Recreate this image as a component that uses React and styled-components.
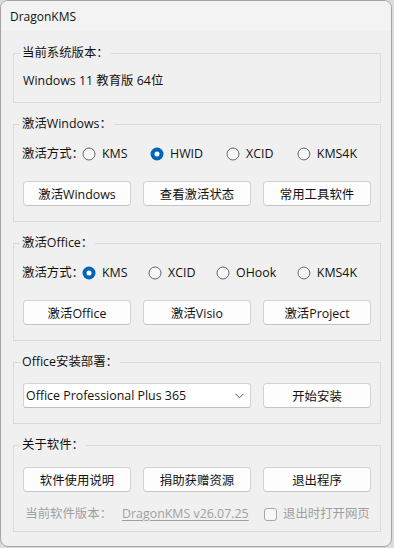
import React, { useState } from "react";
import styled, { createGlobalStyle } from "styled-components";

const GlobalStyle = createGlobalStyle`
  html, body {
    margin: 0;
    padding: 0;
    background: #dcdcdc;
  }
  body {
    font-family: "Open Sans", "Noto Sans CJK SC", sans-serif;
    font-size: 12.4px;
    color: #111;
  }
`;

const Window = styled.div`
  width: 392px;
  height: 547px;
  box-sizing: border-box;
  border: 1px solid #a3a3a3;
  border-radius: 8px;
  background: #f0f0f0;
  overflow: hidden;
  display: flex;
  flex-direction: column;
`;

const TitleBar = styled.div`
  height: 30px;
  flex: none;
  background: #f3f3f3;
  display: flex;
  align-items: center;
  padding-left: 9px;
  font-size: 12px;
  color: #111;
`;

const Body = styled.div`
  padding: 14px 10px 0 12px;
  display: flex;
  flex-direction: column;
  gap: 13px;
`;

const Group = styled.fieldset`
  margin: 0;
  border: 1px solid #dadada;
  padding: 0 9px ${(p) => p.$bottom}px 9px;
  min-width: 0;
`;

const Legend = styled.legend`
  padding: 0 2px;
  margin-left: -3px;
  line-height: 16px;
  color: #111;
`;

const Line = styled.div`
  margin-top: ${(p) => p.$top}px;
  line-height: 16px;
  height: 16px;
  display: flex;
  align-items: center;
  white-space: nowrap;
`;

const RadioLabel = styled.span`
  width: 60px;
  margin-left: -1px;
  flex: none;
  white-space: nowrap;
`;

const RadioItem = styled.label`
  width: ${(p) => p.$w}px;
  flex: none;
  display: flex;
  align-items: center;
  gap: 6px;
  cursor: default;
`;

const Grid = styled.div`
  margin-top: ${(p) => p.$top}px;
  display: grid;
  grid-template-columns: repeat(3, 1fr);
  column-gap: 12px;
`;

const Button = styled.button`
  height: 25px;
  box-sizing: border-box;
  background: #fdfdfd;
  border: 1px solid #d3d3d3;
  border-bottom-color: #c4c4c4;
  border-radius: 4px;
  font: inherit;
  color: #111;
  padding: 0;
  white-space: nowrap;
`;

const Select = styled.div`
  grid-column: span 2;
  height: 25px;
  box-sizing: border-box;
  background: #fff;
  border: 1px solid #d3d3d3;
  border-bottom-color: #bdbdbd;
  border-radius: 3px;
  display: flex;
  align-items: center;
  justify-content: space-between;
  padding: 0 6px 0 2px;
  color: #111;
  white-space: nowrap;
`;

const Footer = styled.div`
  margin-top: 14px;
  display: grid;
  grid-template-columns: repeat(3, 1fr);
  column-gap: 12px;
  line-height: 16px;
  color: #a0a0a0;
  white-space: nowrap;
`;

const Version = styled.div`
  grid-column: span 2;
  display: flex;
  justify-content: center;
  gap: 10px;
`;

const Link = styled.span`
  text-decoration: underline;
  text-underline-offset: 2px;
`;

const CheckRow = styled.label`
  display: flex;
  align-items: center;
  gap: 6px;
  padding-left: 1px;
`;

const Box = styled.span`
  width: 13px;
  height: 13px;
  flex: none;
  box-sizing: border-box;
  border: 1px solid #a8a8a8;
  border-radius: 3px;
  background: #f7f7f7;
`;

function RadioDot({ on }) {
  return (
    <svg width="14" height="14" viewBox="0 0 14 14">
      {on ? (
        <>
          <circle cx="7" cy="7" r="6.5" fill="#0064b9" />
          <circle cx="7" cy="7" r="2.5" fill="#fff" />
        </>
      ) : (
        <circle cx="7" cy="7" r="6" fill="#f7f7f7" stroke="#666" strokeWidth="1" />
      )}
    </svg>
  );
}

function RadioGroup({ options, value, onChange }) {
  return (
    <Line $top={14}>
      <RadioLabel>激活方式：</RadioLabel>
      {options.map((o) => (
        <RadioItem key={o.name} $w={o.w} onClick={() => onChange(o.name)}>
          <RadioDot on={value === o.name} />
          {o.name}
        </RadioItem>
      ))}
    </Line>
  );
}

const winModes = [
  { name: "KMS", w: 68 },
  { name: "HWID", w: 76 },
  { name: "XCID", w: 71 },
  { name: "KMS4K", w: 60 },
];

const officeModes = [
  { name: "KMS", w: 66 },
  { name: "XCID", w: 68 },
  { name: "OHook", w: 81 },
  { name: "KMS4K", w: 60 },
];

export default function App() {
  const [winMode, setWinMode] = useState("HWID");
  const [officeMode, setOfficeMode] = useState("KMS");

  return (
    <>
      <GlobalStyle />
      <Window>
        <TitleBar>DragonKMS</TitleBar>
        <Body>
          <Group $bottom={13}>
            <Legend>当前系统版本：</Legend>
            <Line $top={12}>Windows 11 教育版 64位</Line>
          </Group>

          <Group $bottom={15}>
            <Legend>激活Windows：</Legend>
            <RadioGroup options={winModes} value={winMode} onChange={setWinMode} />
            <Grid $top={19}>
              <Button>激活Windows</Button>
              <Button>查看激活状态</Button>
              <Button>常用工具软件</Button>
            </Grid>
          </Group>

          <Group $bottom={15}>
            <Legend>激活Office：</Legend>
            <RadioGroup options={officeModes} value={officeMode} onChange={setOfficeMode} />
            <Grid $top={19}>
              <Button>激活Office</Button>
              <Button>激活Visio</Button>
              <Button>激活Project</Button>
            </Grid>
          </Group>

          <Group $bottom={15}>
            <Legend>Office安装部署：</Legend>
            <Grid $top={13}>
              <Select>
                <span>Office Professional Plus 365</span>
                <svg width="9" height="6" viewBox="0 0 9 6">
                  <path d="M0.5 0.8 L4.5 4.8 L8.5 0.8" fill="none" stroke="#555" strokeWidth="1" />
                </svg>
              </Select>
              <Button>开始安装</Button>
            </Grid>
          </Group>

          <Group $bottom={9}>
            <Legend>关于软件：</Legend>
            <Grid $top={14}>
              <Button>软件使用说明</Button>
              <Button>捐助获赠资源</Button>
              <Button>退出程序</Button>
            </Grid>
            <Footer>
              <Version>
                <span>当前软件版本：</span>
                <Link>DragonKMS v26.07.25</Link>
              </Version>
              <CheckRow>
                <Box />
                退出时打开网页
              </CheckRow>
            </Footer>
          </Group>
        </Body>
      </Window>
    </>
  );
}
